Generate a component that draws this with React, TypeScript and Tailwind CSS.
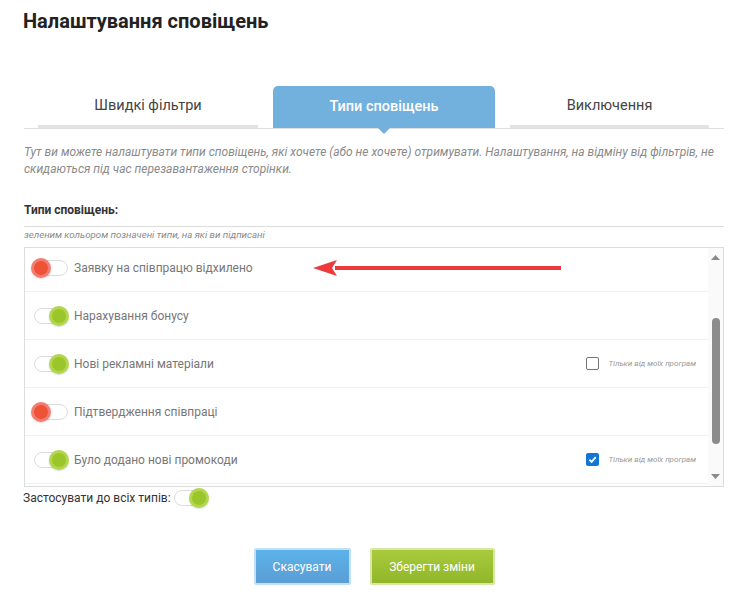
import { useState } from 'react'

type Kind = {
  id: number
  label: string
  on: boolean
  mine?: boolean | null
}

const initialKinds: Kind[] = [
  { id: 1, label: 'Заявку на співпрацю відхилено', on: false },
  { id: 2, label: 'Нарахування бонусу', on: true },
  { id: 3, label: 'Нові рекламні матеріали', on: true, mine: false },
  { id: 4, label: 'Підтвердження співпраці', on: false },
  { id: 5, label: 'Було додано нові промокоди', on: true, mine: true },
]

function Toggle({ on, onClick }: { on: boolean; onClick?: () => void }) {
  return (
    <button onClick={onClick} className="relative w-[34px] h-[16px] shrink-0">
      <span className="absolute inset-0 rounded-full border border-[#dcdcdc] bg-white" />
      {/* knob */}
      <span
        className={
          on
            ? 'absolute top-[-2px] right-[-1px] w-[20px] h-[20px] rounded-full bg-[#9bc62a] border-[3px] border-[#b2d64e] shadow-[0_1px_2px_rgba(0,0,0,0.15)]'
            : 'absolute top-[-2px] left-[-3px] w-[20px] h-[20px] rounded-full bg-[#ef5236] border-[3px] border-[#f47d72] shadow-[0_1px_2px_rgba(0,0,0,0.15)]'
        }
      />
    </button>
  )
}

function Checkbox({ checked }: { checked: boolean }) {
  return checked ? (
    <span className="w-[13px] h-[13px] rounded-[2px] bg-[#1376d6] flex items-center justify-center">
      <svg width="9" height="9" viewBox="0 0 10 10">
        <path d="M1.5 5.2 L4 7.6 L8.6 2.4" fill="none" stroke="white" strokeWidth="2" />
      </svg>
    </span>
  ) : (
    <span className="w-[13px] h-[13px] rounded-[2px] border border-[#767676] bg-white" />
  )
}

export default function App() {
  const [kinds, setKinds] = useState(initialKinds)
  const [all, setAll] = useState(true)
  const [tab, setTab] = useState(1)

  const tabs = [
    { name: 'Швидкі фільтри', cls: 'ml-[14px] w-[220px]' },
    { name: 'Типи сповіщень', cls: 'ml-[15px] w-[222px]' },
    { name: 'Виключення', cls: 'ml-[15px] w-[199px]' },
  ]

  return (
    <div className="w-[748px] h-[610px] bg-white px-6 pt-[9px] font-['Roboto',sans-serif] text-[#333]">
      <h1 className="text-[20px] leading-[24px] font-bold text-[#222] -ml-px">Налаштування сповіщень</h1>

      {/* Tabs */}
      <div className="mt-[53px] flex border-b border-[#dedede] h-[43px]">
        {tabs.map((t, i) =>
          i === tab ? (
            <button
              key={t.name}
              onClick={() => setTab(i)}
              className={`${t.cls} relative h-[42px] rounded-t-[5px] bg-[#72b0dd] text-white text-[14.5px] font-medium`}
            >
              {t.name}
              <span className="absolute left-1/2 -translate-x-1/2 top-[42px] w-0 h-0 border-l-[6px] border-r-[6px] border-t-[6px] border-l-transparent border-r-transparent border-t-[#72b0dd]" />
            </button>
          ) : (
            <button
              key={t.name}
              onClick={() => setTab(i)}
              className={`${t.cls} h-[42px] border-b-[3px] border-[#e3e3e3] text-[14.5px] text-[#444]`}
            >
              {t.name}
            </button>
          )
        )}
      </div>

      <p className="mt-[15px] text-[12px] leading-[17px] italic text-[#8a8a8a]">
        Тут ви можете налаштувати типи сповіщень, які хочете (або не хочете) отримувати. Налаштування, на відміну від фільтрів, не скидаються під час перезавантаження сторінки.
      </p>

      <div className="mt-[25px] pb-[8px] border-b border-[#dedede] text-[12px] leading-[15px] font-bold text-[#333]">
        Типи сповіщень:
      </div>
      <div className="mt-[2px] text-[9.7px] leading-[12px] italic text-[#8a8a8a]">
        зеленим кольором позначені типи, на які ви підписані
      </div>

      {/* List */}
      <div className="mt-[6px] h-[240px] border border-[#dcdcdc] flex">
        <div className="flex-1 overflow-hidden">
          <div className="-mt-[4px]">
            {kinds.map((k, i) => (
              <div key={k.id} className="relative h-[48px] border-b border-[#f0f0f0] flex items-center pl-[9px] pr-[12px]">
                <Toggle
                  on={k.on}
                  onClick={() => setKinds(ks => ks.map(x => (x.id === k.id ? { ...x, on: !x.on } : x)))}
                />
                <span className="ml-[6px] text-[12px] text-[#777]">{k.label}</span>
                {k.mine != null && (
                  <span className="ml-auto flex items-center gap-[9px]">
                    <Checkbox checked={k.mine} />
                    <span className="text-[8px] italic text-[#999]">Тільки від моїх програм</span>
                  </span>
                )}
                {i === 0 && (
                  <svg className="absolute left-[288px] top-[15px]" width="250" height="18" viewBox="0 0 250 18">
                    <path d="M22 9 H248" stroke="#ee3a3a" strokeWidth="4" />
                    <path d="M0 9 L24 1 L19 9 L24 17 Z" fill="#ee3a3a" />
                  </svg>
                )}
              </div>
            ))}
          </div>
        </div>
        {/* scrollbar */}
        <div className="w-[15px] bg-[#fafafa] flex flex-col items-center">
          <svg className="mt-[7px]" width="9" height="5" viewBox="0 0 9 5"><path d="M0 5 L4.5 0 L9 5 Z" fill="#8a8a8a" /></svg>
          <div className="mt-[58px] w-[8px] h-[126px] rounded-full bg-[#8c8c8c]" />
          <svg className="mt-auto mb-[7px]" width="9" height="5" viewBox="0 0 9 5"><path d="M0 0 L9 0 L4.5 5 Z" fill="#8a8a8a" /></svg>
        </div>
      </div>

      <div className="mt-[2px] flex items-center gap-[3px] -ml-px">
        <span className="text-[12px] text-[#333]">Застосувати до всіх типів:</span>
        <Toggle on={all} onClick={() => setAll(v => !v)} />
      </div>

      <div className="mt-[41px] flex justify-center gap-[19px]">
        <button className="w-[97px] h-[37px] rounded-[2px] border-2 border-[#c3e1f6] bg-gradient-to-b from-[#5cb2ea] to-[#5a9ed5] text-white text-[12px]">
          Скасувати
        </button>
        <button className="w-[125px] h-[37px] rounded-[2px] border-2 border-[#d7e7a6] bg-gradient-to-b from-[#a8cb3d] to-[#92b629] text-white text-[12px]">
          Зберегти зміни
        </button>
      </div>
    </div>
  )
}
